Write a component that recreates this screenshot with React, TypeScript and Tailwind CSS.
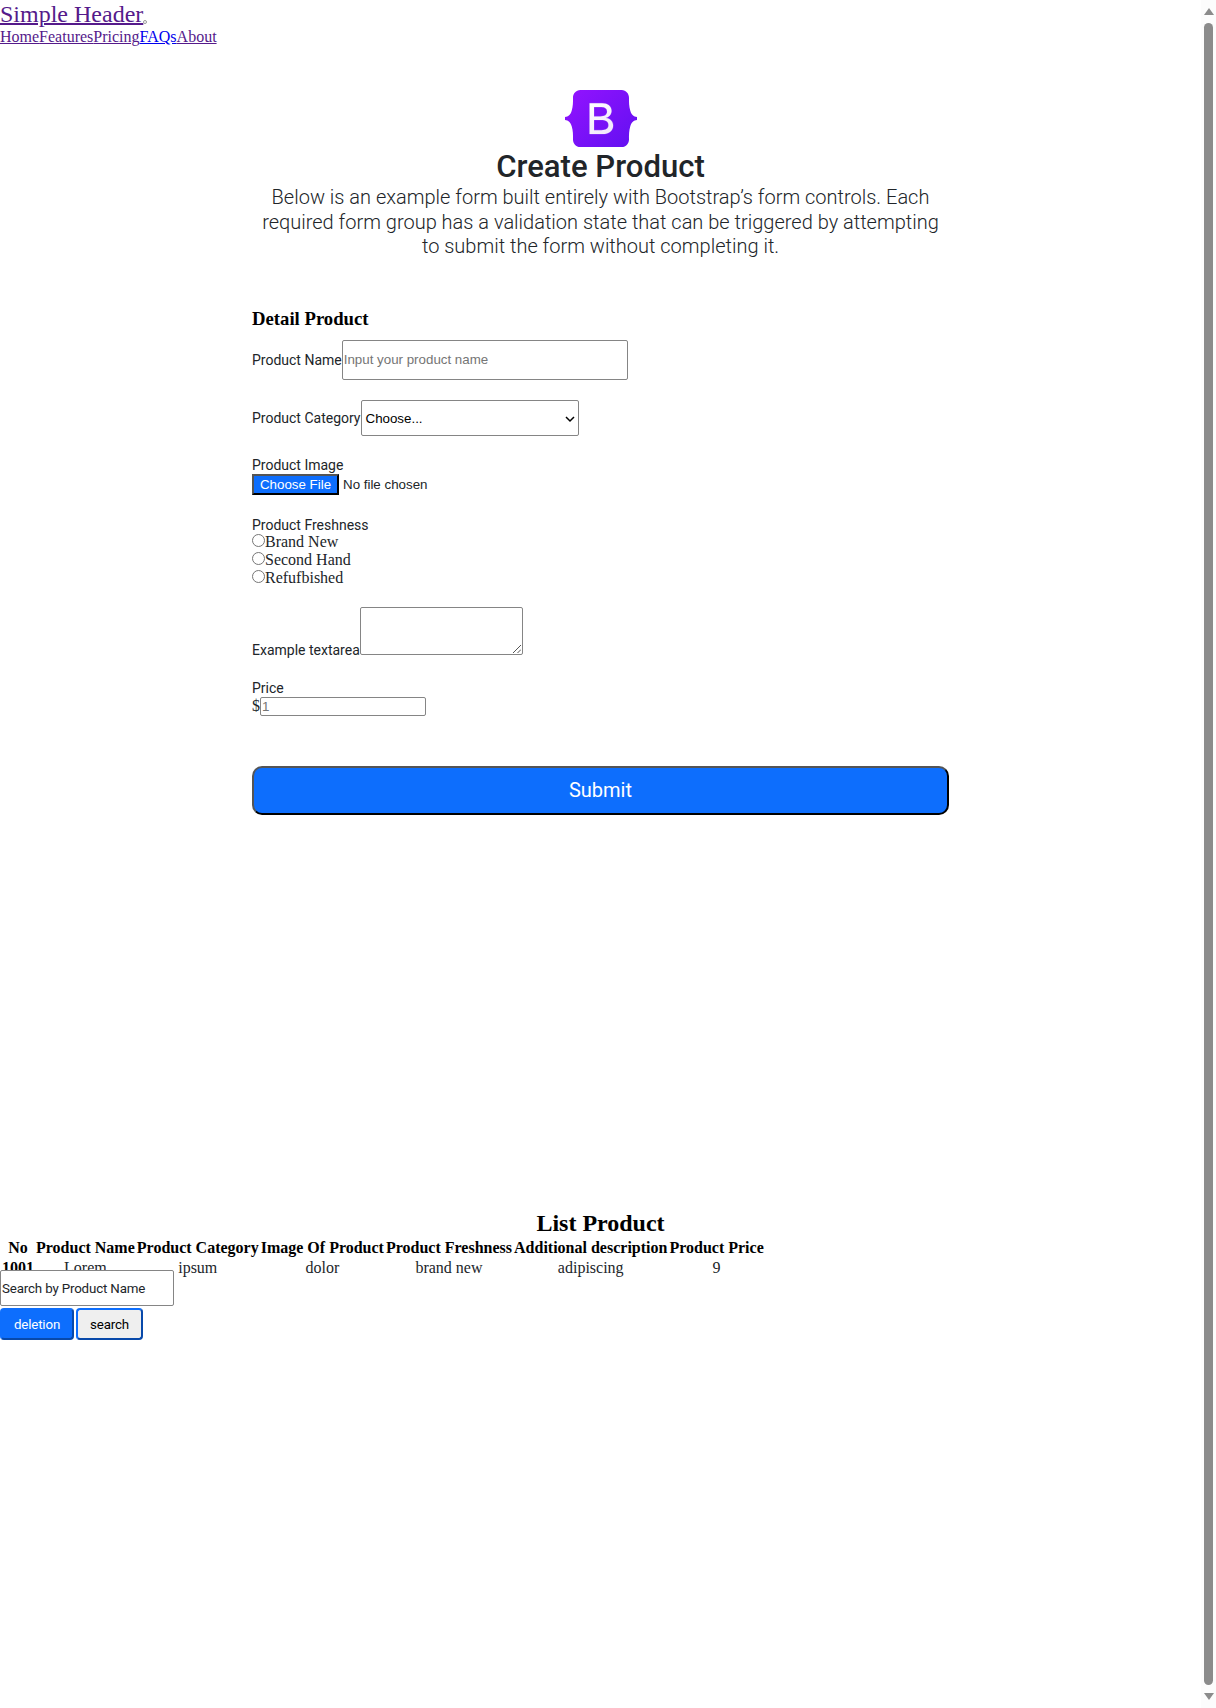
import React from "react";

const serif = "font-['Liberation_Serif',serif]";

function Label({ children }: { children: React.ReactNode }) {
  return <label className="font-[Roboto,sans-serif] text-[14px] leading-4 text-[#212529]">{children}</label>;
}

function Radio({ text }: { text: string }) {
  return (
    <div className="flex h-[18px] items-start">
      <span className="h-[13px] w-[13px] rounded-full border border-[#767676] bg-white" />
      <span className="text-[16px] leading-[16px] text-[#212529]">{text}</span>
    </div>
  );
}

function Logo() {
  return (
    <svg className="block h-[57px] w-[72px]" viewBox="0 0 72 57">
      <defs>
        <linearGradient id="shell" x1="10" y1="0" x2="60" y2="57" gradientUnits="userSpaceOnUse">
          <stop stopColor="#9013fe" />
          <stop offset="1" stopColor="#6610f2" />
        </linearGradient>
        <linearGradient id="letter" x1="26" y1="13" x2="44" y2="44" gradientUnits="userSpaceOnUse">
          <stop stopColor="#fff" />
          <stop offset="1" stopColor="#f1e5fc" />
        </linearGradient>
      </defs>
      <path
        fill="url(#shell)"
        d="M15.3 0C11 0 7.8 3.8 8 7.8c.1 3.9 0 8.9-1.3 13C5.400 25 3.300 26.700 0 27v3c3.300.3 5.400 2 6.700 6.200 1.300 4.100 1.400 9.100 1.300 13C7.800 53.200 11 57 15.300 57h41.400c4.300 0 7.400-3.800 7.300-7.800-.1-3.900 0-8.900 1.300-13C66.600 32 68.700 30.300 72 30v-3c-3.300-.3-5.400-2-6.700-6.200-1.300-4.100-1.400-9.100-1.300-13C64.100 3.800 61 0 56.700 0z"
      />
      <path
        fill="url(#letter)"
        stroke="#fff"
        strokeWidth=".2"
        fillRule="evenodd"
        d="M24.600 13.300h12.600c5.700 0 9.300 3 9.300 7.700 0 3.300-2.500 6.200-5.600 6.700v.2c4.300.5 7.200 3.400 7.200 7.500 0 5.400-4 8.600-10.700 8.600H24.600zM29 17.100v9.300h6.200c4.500 0 6.900-1.700 6.900-4.900 0-2.800-2.100-4.400-5.600-4.400zM29 29.900v10.300h7.500c4.600 0 7-1.800 7-5.200s-2.500-5.100-7.400-5.100z"
      />
    </svg>
  );
}

const headings = ["No", "Product Name", "Product Category", "Image Of Product", "Product Freshness", "Additional description", "Product Price"];
const cells = ["Lorem", "ipsum", "dolor", "brand new", "adipiscing", "9"];

export default function App() {
  return (
    <div className={`flex h-[1708px] w-[1216px] overflow-hidden bg-white text-[16px] text-black ${serif}`}>
      <main className="w-[1201px] shrink-0">
        <header className="h-[90px]">
          <div className="flex h-[28px]">
            <a className="text-[24px] leading-[28px] text-[#551a8b] underline decoration-2">Simple Header</a>
            <span className="mt-5 h-[4px] w-[4px] rounded-full border border-[#999]" />
          </div>
          <nav className="flex leading-[18px] text-[#551a8b]">
            <a className="underline">Home</a>
            <a className="underline">Features</a>
            <a className="underline">Pricing</a>
            <a className="text-[#0000ee] underline">FAQs</a>
            <a className="underline">About</a>
          </nav>
        </header>

        <div className="mx-auto flex w-[697px] flex-col">
          <div className="flex flex-col items-center font-[Roboto,sans-serif] text-[#212529]">
            <Logo />
            <h2 className="h-[38px] text-[31.100px] leading-[39px] font-medium">Create Product</h2>
            <p className="h-[74px] w-[696px] text-center text-[20px] leading-[24.500px] font-light">
              Below is an example form built entirely with Bootstrap’s form controls. Each
              <br />
              required form group has a validation state that can be triggered by attempting
              <br />
              to submit the form without completing it.
            </p>
          </div>

          <h4 className="mt-[50px] h-[31px] text-[18.720px] leading-[20px] font-bold">Detail Product</h4>
          <div className="flex h-[40px] items-center">
            <Label>Product Name</Label>
            <input
              className="h-[40px] w-[286px] rounded-[2px] border border-[#858585] px-px pb-[2px] font-['Liberation_Sans',sans-serif] text-[13.333px] placeholder:text-[#757575]"
              placeholder="Input your product name"
            />
          </div>

          <div className="mt-5 flex h-[36px] items-center">
            <Label>Product Category</Label>
            <div className="flex h-[36px] w-[218px] items-center justify-between rounded-[2px] border border-[#858585] pt-px pr-[3px] pl-1 font-['Liberation_Sans',sans-serif] text-[13.333px]">
              <span>Choose...</span>
              <svg className="h-[10px] w-[10px]" viewBox="0 0 10 10" fill="none" stroke="black" strokeWidth="1.500">
                <path d="M1 3l4 4 4-4" />
              </svg>
            </div>
          </div>

          <div className="mt-[21px] flex h-[17px]">
            <Label>Product Image</Label>
          </div>
          <div className="flex h-[21px] items-center font-['Liberation_Sans',sans-serif] text-[13.333px]">
            <button className="h-[21px] w-[87px] border-2 border-t-[#555] border-r-black border-b-black border-l-[#555] bg-[#0d6efd] leading-[15px] whitespace-nowrap text-white">
              Choose File
            </button>
            <span className="ml-1 text-[#212529]">No file chosen</span>
          </div>

          <div className="mt-[22px] flex h-[17px]">
            <Label>Product Freshness</Label>
          </div>
          <Radio text="Brand New" />
          <Radio text="Second Hand" />
          <Radio text="Refufbished" />

          <div className="mt-[19px] flex h-[48px] items-end">
            <div className="flex h-[11px] items-center">
              <Label>Example textarea</Label>
            </div>
            <div className="flex h-[48px] w-[163px] items-end justify-end rounded-[2px] border border-[#858585] p-px">
              <svg className="h-[8px] w-[8px]" viewBox="0 0 8 8" fill="none" stroke="#555">
                <path d="M0 8L8 0M4.500 8L8 4.500" />
              </svg>
            </div>
          </div>

          <div className="mt-[25px] flex h-[17px]">
            <Label>Price</Label>
          </div>
          <div className="flex h-[19px] items-start leading-[17px] text-[#212529]">
            <span>$</span>
            <input
              className="h-[19px] w-[166px] rounded-[2px] border border-[#858585] px-px font-['Liberation_Sans',sans-serif] text-[13.333px] placeholder:text-[#757575]"
              placeholder="1"
            />
          </div>

          <button className="mt-[50px] h-[49px] w-[697px] rounded-[10px] border-2 border-t-[#555] border-r-black border-b-black border-l-[#555] bg-[#0d6efd] pb-px font-[Roboto,sans-serif] text-[20px] text-white">
            Submit
          </button>
        </div>

        <section className="mt-[395px]">
          <h2 className="text-center text-[24px] leading-[27px] font-bold">List Product</h2>
          <div className="h-[33px]">
            <table className="border-separate border-spacing-[2px] text-center leading-[18px]">
              <thead>
                <tr>
                  {headings.map((h) => (
                    <th key={h} className="p-0 font-bold whitespace-nowrap first:px-px">{h}</th>
                  ))}
                </tr>
              </thead>
              <tbody>
                <tr>
                  <th className="p-0 font-bold">1001</th>
                  {cells.map((c) => (
                    <td key={c} className="p-0 text-[#212529]">{c}</td>
                  ))}
                </tr>
              </tbody>
            </table>
          </div>
          <div className="relative z-10 flex h-[36px] w-[174px] items-center rounded-[2px] border border-[#858585] bg-white pt-px pl-px font-[Roboto,sans-serif] text-[13.333px] tracking-[-0.16px] text-[#212529]">
            Search by Product Name
          </div>
          <div className="mt-[2px] flex gap-[2px] font-[Roboto,sans-serif] text-[13.333px] tracking-[-0.16px]">
            <button className="h-[32px] w-[74px] rounded-[4px] border-2 border-t-[#0d6efd] border-r-[#0849aa] border-b-[#0849aa] border-l-[#0d6efd] bg-[#0d6efd] pt-px text-white">
              deletion
            </button>
            <button className="h-[32px] w-[67px] rounded-[4px] border-2 border-t-[#0d6efd] border-r-[#0849aa] border-b-[#0849aa] border-l-[#0d6efd] bg-[#efefef] pt-px text-black">
              search
            </button>
          </div>
        </section>
      </main>

      <aside className="flex w-[15px] flex-col items-center bg-[#fcfcfc] pt-2">
        <svg className="h-[7px] w-[10px] shrink-0" viewBox="0 0 10 7">
          <path d="M5 0l5 7H0z" fill="#8b8b8b" />
        </svg>
        <div className="mt-2 h-[1662px] w-[9px] shrink-0 rounded-full bg-[#8b8b8b]" />
        <svg className="mt-2 h-[7px] w-[10px] shrink-0" viewBox="0 0 10 7">
          <path d="M0 0h10L5 7z" fill="#8b8b8b" />
        </svg>
      </aside>
    </div>
  );
}
